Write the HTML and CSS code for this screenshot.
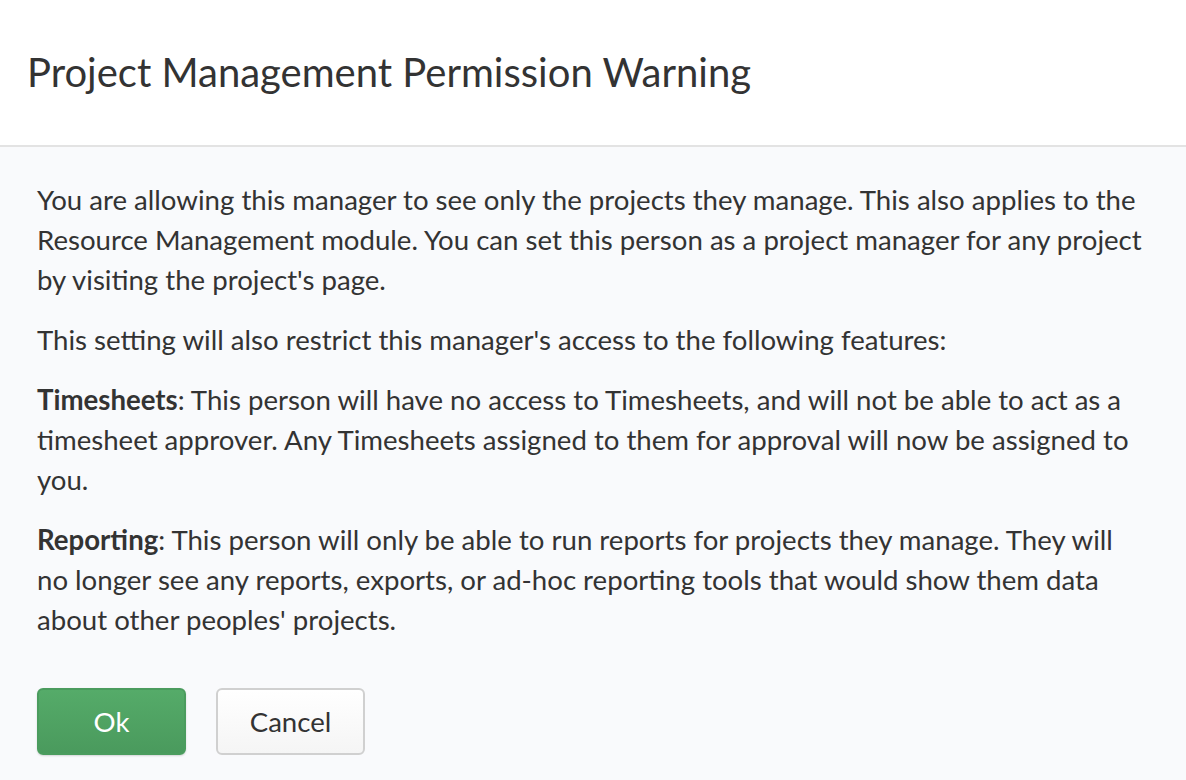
FILE: index.html
```html
<!DOCTYPE html>
<html lang="en">
<head>
    <meta charset="UTF-8">
    <title>Project Management Permission Warning</title>
    <link rel="stylesheet" href="styles.css">
</head>
<body>
    <div class="modal">
        <header class="modal-header">
            <h1>Project Management Permission Warning</h1>
        </header>

        <main class="modal-body">
            <p>You are allowing this manager to see only the projects they manage. This also applies to the Resource Management module. You can set this person as a project manager for any project by visiting the project's page.</p>
            <p>This setting will also restrict this manager's access to the following features:</p>
            <p><strong>Timesheets</strong>: This person will have no access to Timesheets, and will not be able to act as a timesheet approver. Any Timesheets assigned to them for approval will now be assigned to you.</p>
            <p><strong>Reporting</strong>: This person will only be able to run reports for projects they manage. They will no longer see any reports, exports, or ad-hoc reporting tools that would show them data about other peoples' projects.</p>

            <div class="controls">
                <button class="btn btn-ok">Ok</button>
                <button class="btn btn-cancel">Cancel</button>
            </div>
        </main>
    </div>
</body>
</html>
```

FILE: styles.css
```css
html, body {
    margin: 0;
    padding: 0;
    height: 100%;
}

body {
    font-family: Lato, "Open Sans", sans-serif;
    color: #333;
    background-color: #f9fafc;
}

.modal {
    min-height: 100%;
    background-color: #f9fafc;
}

.modal-header {
    background-color: #fff;
    border-bottom: 2px solid #e3e3e3;
    height: 147px;
    display: flex;
    align-items: center;
    padding: 0 27px;
    box-sizing: border-box;
}

.modal-header h1 {
    margin: 0 0 2px;
    font-size: 40px;
    font-weight: 400;
    color: #333;
}

.modal-body {
    padding: 33px 37px 20px;
}

.modal-body p {
    margin: 0 0 20px;
    font-size: 27.6px;
    line-height: 40px;
}

.controls {
    margin-top: 48px;
    display: flex;
    gap: 30px;
}

.btn {
    width: 149px;
    height: 67px;
    font-family: inherit;
    font-size: 27.6px;
    border-radius: 6px;
    cursor: pointer;
}

.btn-ok {
    color: #fff;
    background: linear-gradient(#55ab69, #4a9a5d);
    border: 2px solid #4b9c5e;
    box-shadow: 0 1px 2px rgba(0,0,0,0.15);
}

.btn-cancel {
    color: #333;
    background: linear-gradient(#fff, #f5f5f5);
    border: 2px solid #d0d0d0;
}
```
